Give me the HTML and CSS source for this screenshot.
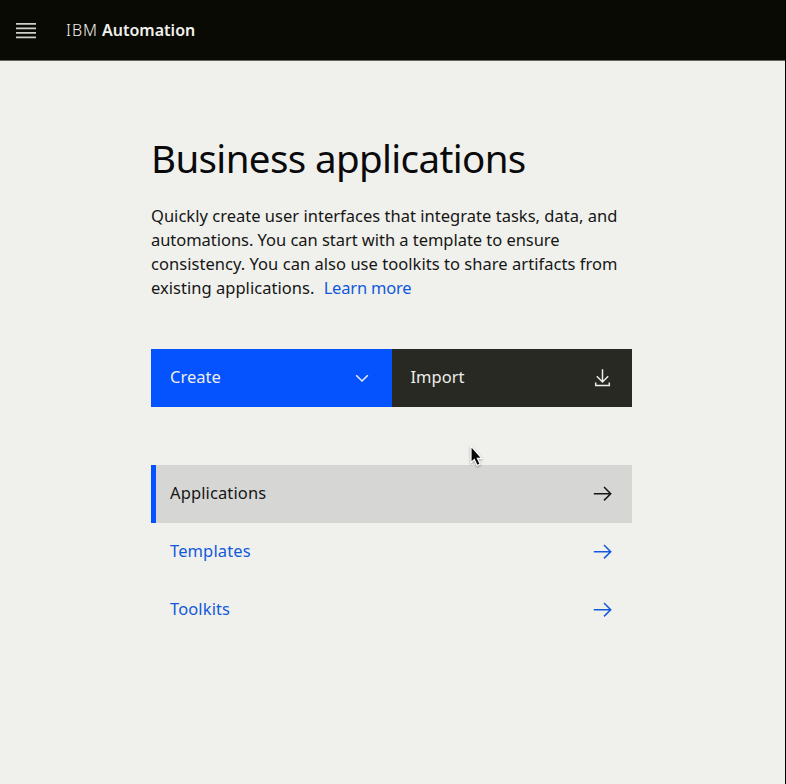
FILE: index.html
```html
<!DOCTYPE html>
<html lang="en">
<head>
<meta charset="utf-8">
<title>IBM Automation</title>
<link rel="stylesheet" href="styles.css">
</head>
<body>
<header class="header">
  <svg class="menu" width="20" height="17" viewBox="0 0 20 17" aria-hidden="true"><path d="M0 1.8h20M0 6.3h20M0 10.8h20M0 15.3h20"/></svg>
  <div class="brand"><span class="brand-prefix">IBM</span> <b class="brand-name">Automation</b></div>
</header>
<main class="main">
  <h1 class="title">Business applications</h1>
  <p class="intro">
    <span class="line line-1">Quickly create user interfaces that integrate tasks, data, and</span>
    <span class="line line-2">automations. You can start with a template to ensure</span>
    <span class="line line-3">consistency. You can also use toolkits to share artifacts from</span>
    <span class="line line-4">existing applications. <a class="learn">Learn more</a></span>
  </p>
  <div class="actions">
    <button class="action create"><span class="create-label">Create</span>
      <svg class="icon" width="20" height="20" viewBox="0 0 20 20"><path d="M4.2 7.2l5.8 5.8 5.8-5.8"/></svg>
    </button>
    <button class="action import"><span class="import-label">Import</span>
      <svg class="icon" width="20" height="20" viewBox="0 0 20 20"><path d="M10.5 1.2v12.6M4.8 8.3l5.7 5.7 5.7-5.7M3.7 14.4v3.1h13.6v-3.1"/></svg>
    </button>
  </div>
  <nav class="nav">
    <a class="item selected"><span class="applications">Applications</span>
      <svg class="icon" width="20" height="20" viewBox="0 0 20 20"><path d="M1.8 10.7h17M12 4l6.7 6.7-6.7 6.7"/></svg></a>
    <a class="item"><span class="templates">Templates</span>
      <svg class="icon" width="20" height="20" viewBox="0 0 20 20"><path d="M1.8 10.7h17M12 4l6.7 6.7-6.7 6.7"/></svg></a>
    <a class="item"><span class="toolkits">Toolkits</span>
      <svg class="icon" width="20" height="20" viewBox="0 0 20 20"><path d="M1.8 10.7h17M12 4l6.7 6.7-6.7 6.7"/></svg></a>
  </nav>
</main>
<svg class="cursor" width="16" height="26" viewBox="0 0 16 26" aria-hidden="true"><path d="M2 2v16.6l3.3-3.1 2.8 6 3-1.4-2.7-5.8h4.4z"/></svg>
</body>
</html>
```
FILE: styles.css
```css
* { box-sizing: border-box; }
body {
  margin: 0;
  height: 784px;
  overflow: hidden;
  background: #f0f1ec;
  border-right: 1px solid #000;
  color: #161616;
  font: 16.5px/24px "Noto Sans", sans-serif;
}
.header {
  height: 61px;
  background: #090a03;
  border-bottom: 1px solid #65655f;
  display: flex;
  align-items: center;
  padding: 1px 16px 0;
  gap: 30px;
}
.menu { stroke: #d0d0cb; stroke-width: 1.7; fill: none; }
.brand { color: #f0f0ec; font-size: 16px; white-space: nowrap; margin-top: -2px; }
.brand-prefix { font-weight: 300; letter-spacing: .9px; }
.brand-name { font-weight: 600; letter-spacing: .02px; }
.main { width: 481px; margin: 74px 0 0 151px; }
.title { margin: 0; font-size: 38.5px; line-height: 46px; font-weight: 400; letter-spacing: -.63px; color: #0a0a0c; white-space: nowrap; }
.intro { margin: 23px 0 0; }
.line { display: block; white-space: nowrap; }
.line-1 { letter-spacing: .02px; }
.line-2 { letter-spacing: -.04px; }
.line-3 { letter-spacing: .04px; }
.line-4 { letter-spacing: .03px; }
.learn { color: #1259db; margin-left: 5px; letter-spacing: -.2px; }
.actions { display: flex; margin-top: 49px; height: 58px; }
.action {
  flex: 1;
  border: 0;
  font: inherit;
  color: #eeeeea;
  display: flex;
  justify-content: space-between;
  align-items: center;
  padding: 0 20px 2px 19px;
}
.create { background: #0453ff; }
.import { background: #292924; }
.icon { fill: none; stroke: currentColor; stroke-width: 1.5; }
.action .icon { margin-top: 2px; }
.nav { margin-top: 58px; }
.item {
  height: 57.75px;
  display: flex;
  justify-content: space-between;
  align-items: center;
  padding: 0 20px 1px 19px;
  color: #1259db;
  letter-spacing: .12px;
}
.selected { background: #d6d6d4; color: #161616; border-left: 5px solid #0453ff; padding-left: 14px; }
.cursor { position: absolute; left: 469px; top: 444px; fill: #080808; stroke: #fff; stroke-width: 1.2; filter: drop-shadow(0 1px 1px rgba(0,0,0,.35)); }
```
